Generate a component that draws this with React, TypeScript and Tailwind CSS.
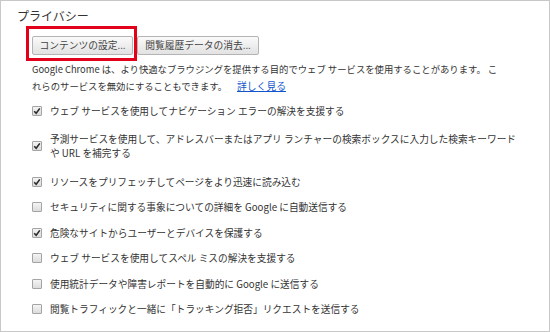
import React from 'react';

const font = "font-['Noto_Sans_CJK_JP','Noto_Sans',sans-serif]";

interface Option {
  id: string;
  checked: boolean;
  lines: string[];
}

const options: Option[] = [
  { id: 'nav', checked: true, lines: ['ウェブ サービスを使用してナビゲーション エラーの解決を支援する'] },
  {
    id: 'predict',
    checked: true,
    lines: ['予測サービスを使用して、アドレスバーまたはアプリ ランチャーの検索ボックスに入力した検索キーワード', 'や URL を補完する'],
  },
  { id: 'prefetch', checked: true, lines: ['リソースをプリフェッチしてページをより迅速に読み込む'] },
  { id: 'security', checked: false, lines: ['セキュリティに関する事象についての詳細を Google に自動送信する'] },
  { id: 'safe', checked: true, lines: ['危険なサイトからユーザーとデバイスを保護する'] },
  { id: 'spell', checked: false, lines: ['ウェブ サービスを使用してスペル ミスの解決を支援する'] },
  { id: 'stats', checked: false, lines: ['使用統計データや障害レポートを自動的に Google に送信する'] },
  { id: 'dnt', checked: false, lines: ['閲覧トラフィックと一緒に「トラッキング拒否」リクエストを送信する'] },
];

const Checkbox: React.FC<{ checked: boolean }> = ({ checked }) => (
  <span className="flex h-[10px] w-[10px] flex-shrink-0 items-center justify-center rounded-[1px] border border-[#a4a4a4] bg-gradient-to-b from-[#f4f4f4] to-[#dcdcdc]">
    {checked && (
      <svg width="8" height="8" viewBox="0 0 8 8">
        <path d="M1.2 4.2 L3.2 6.3 L6.8 1.4" fill="none" stroke="#2b2b2b" strokeWidth="1.6" />
      </svg>
    )}
  </span>
);

// widths taken from the screenshot
const Button: React.FC<{ label: string; width: string }> = ({ label, width }) => (
  <button className={`h-[19px] ${width} rounded-[2px] border border-[#b4b4b4] bg-gradient-to-b from-[#fafafa] to-[#e2e2e2] text-center text-[9.75px] leading-[17px] text-[#444]`}>
    {label}
  </button>
);

export default function App() {
  return (
    <div className={`h-[332px] w-[550px] border border-[#c8c8c8] bg-white text-[#333] ${font}`}>
      <h3 className="pl-[16px] pt-[7px] text-[12px] leading-[16px] text-[#333]">プライバシー</h3>

      <div className="mt-[2px] flex items-start pl-[25px]">
        <div className="border-[3px] border-[#e3001b] pb-[3px] pl-[3px] pr-[1px] pt-[1px]">
          <Button label="コンテンツの設定..." width="w-[101px]" />
        </div>
        <div className="pt-[4px]">
          <Button label="閲覧履歴データの消去..." width="w-[122px]" />
        </div>
      </div>

      <p className="pl-[31px] text-[9.35px] leading-[17px]">
        <span className="block whitespace-nowrap">Google Chrome は、より快適なブラウジングを提供する目的でウェブ サービスを使用することがあります。 こ</span>
        <span className="block whitespace-nowrap">
          れらのサービスを無効にすることもできます。
          <a href="#" className="ml-[10px] text-[9.8px] text-[#1155cc] underline">詳しく見る</a>
        </span>
      </p>

      <ul className="mt-[8.5px] flex flex-col gap-[11.5px] pl-[31px]">
        {options.map(o => (
          <li key={o.id} className={`flex items-center gap-[8px] ${o.lines.length > 1 ? 'py-[3px]' : ''}`}>
            <Checkbox checked={o.checked} />
            <div className="text-[9.7px] leading-[14px]">
              {o.lines.map(l => (
                <span key={l} className="block whitespace-nowrap">{l}</span>
              ))}
            </div>
          </li>
        ))}
      </ul>
    </div>
  );
}
